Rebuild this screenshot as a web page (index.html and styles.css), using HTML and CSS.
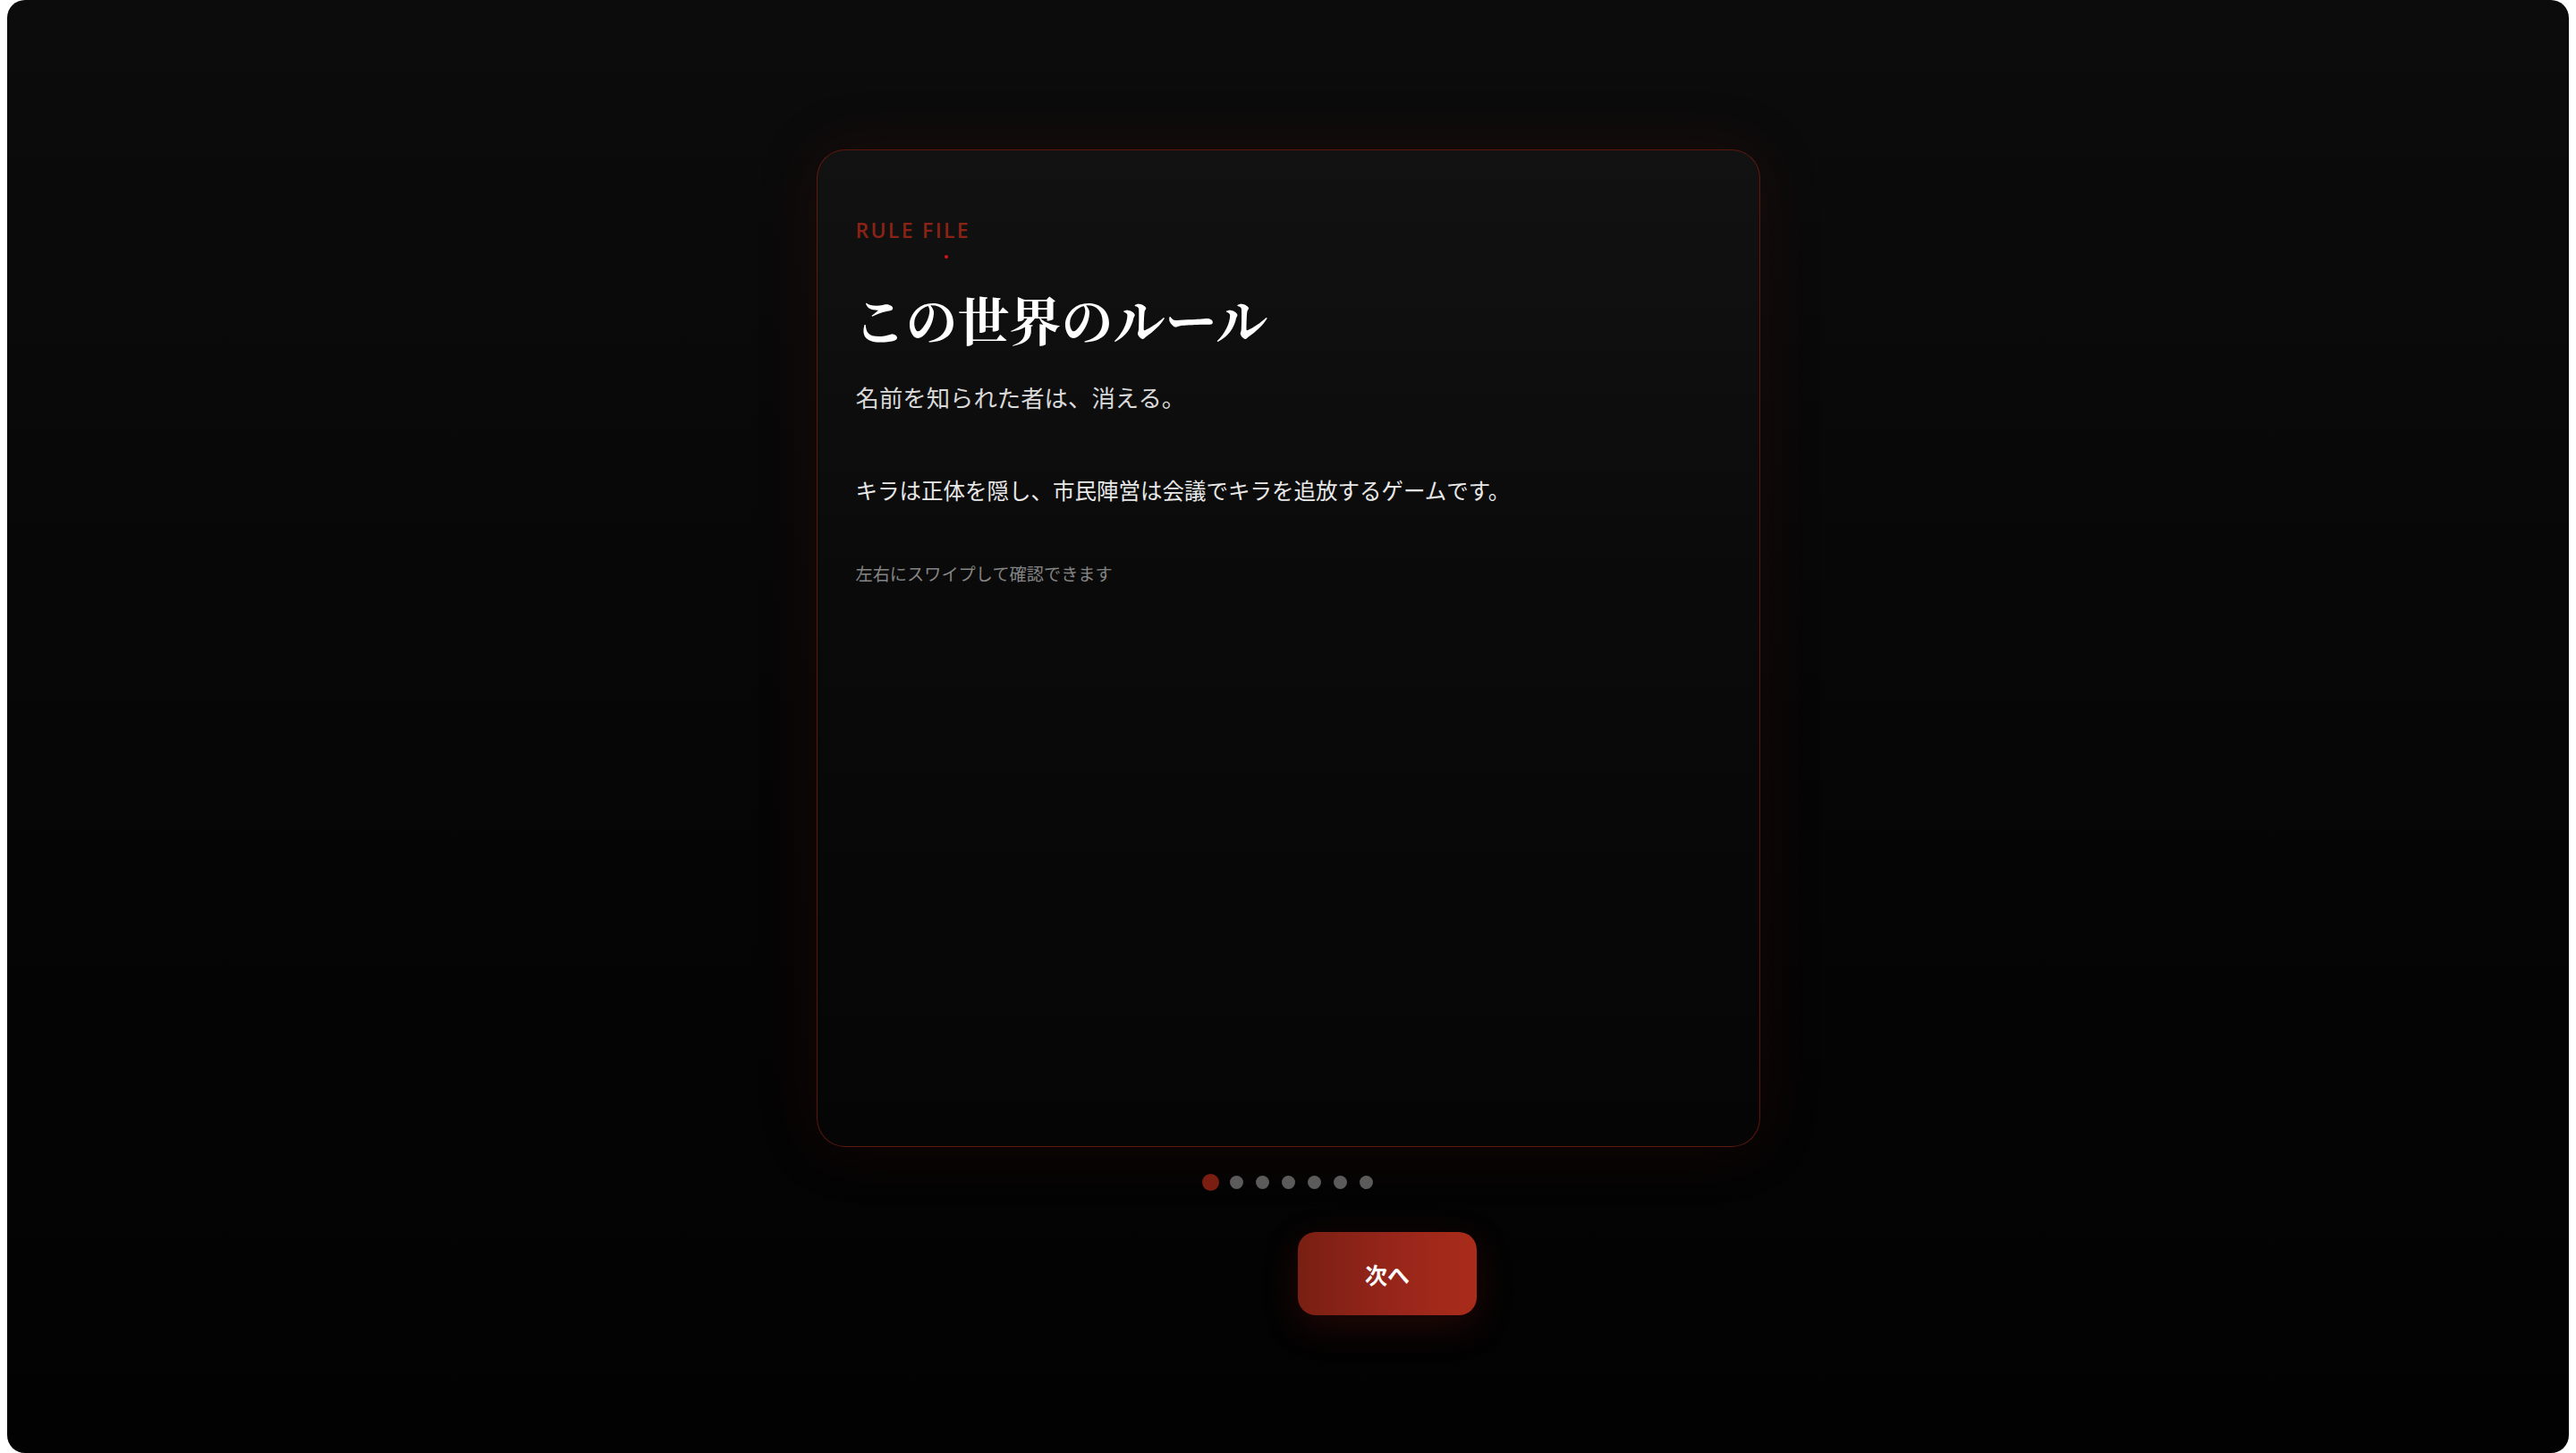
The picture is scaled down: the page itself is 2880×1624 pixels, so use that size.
FILE: index.html
```html
<!DOCTYPE html>
<html lang="ja">
<head>
<meta charset="utf-8">
<title>この世界のルール</title>
<link rel="stylesheet" href="styles.css">
</head>
<body>
<div class="frame">
  <main class="stage">
    <section class="card">
      <div class="label">RULE FILE</div>
      <span class="label-dot"></span>
      <h1 class="title">この世界のルール</h1>
      <p class="lead">名前を知られた者は、消える。</p>
      <p class="body">キラは正体を隠し、市民陣営は会議でキラを追放するゲームです。</p>
      <p class="hint">左右にスワイプして確認できます</p>
    </section>
    <div class="dots">
      <span class="dot active"></span>
      <span class="dot"></span>
      <span class="dot"></span>
      <span class="dot"></span>
      <span class="dot"></span>
      <span class="dot"></span>
      <span class="dot"></span>
    </div>
    <div class="nav">
      <button class="btn btn-back" type="button">戻る</button>
      <button class="btn btn-next" type="button">次へ</button>
    </div>
  </main>
</div>
</body>
</html>
```

FILE: styles.css
```css
html, body {
  margin: 0;
  padding: 0;
  overflow: hidden;
}
body {
  background: #ffffff;
  padding: 0 8px;
  font-family: "Noto Sans CJK JP", "Noto Sans", sans-serif;
}
.frame {
  height: 1624px;
  border-radius: 20px;
  background: linear-gradient(180deg, #0c0c0c 0%, #060606 50%, #020202 100%);
  overflow: hidden;
}
.stage {
  display: flex;
  flex-direction: column;
  align-items: center;
  padding-top: 167px;
}
.card {
  box-sizing: border-box;
  width: 1055px;
  height: 1115px;
  border: 1px solid rgba(120, 30, 18, 0.75);
  border-radius: 32px;
  background: linear-gradient(180deg, #121212 0%, #0a0a0a 45%, #050505 100%);
  box-shadow: 0 0 70px rgba(110, 22, 12, 0.16);
  padding: 74px 43px 0 43px;
  display: flex;
  flex-direction: column;
  align-items: flex-start;
}
.label {
  font-family: "Open Sans", "Noto Sans", sans-serif;
  font-size: 23px;
  line-height: 30px;
  letter-spacing: 0.1em;
  color: #8a2316;
  font-weight: 600;
}
.label-dot {
  width: 4px;
  height: 4px;
  border-radius: 50%;
  background: #d4141a;
  margin: 13px 0 0 99px;
}
.title {
  margin: 31px 0 0 -2px;
  font-family: "Noto Serif CJK JP", "Noto Serif JP", "IPAMincho", serif;
  font-weight: 700;
  font-size: 58px;
  line-height: 72px;
  color: #ffffff;
}
.lead {
  margin: 32px 0 0 0;
  font-size: 26.4px;
  line-height: 40px;
  color: #d9d9d9;
}
.body {
  margin: 66px 0 0 0;
  font-size: 24.5px;
  line-height: 36px;
  color: #e8e8e8;
}
.hint {
  margin: 61px 0 0 0;
  font-size: 19.2px;
  line-height: 28px;
  color: #858585;
}
.dots {
  display: flex;
  align-items: center;
  gap: 14px;
  margin-top: 30px;
  height: 19px;
}
.dot {
  width: 15px;
  height: 15px;
  border-radius: 50%;
  background: #5b5b5b;
}
.dot.active {
  width: 19px;
  height: 19px;
  background: #7b1e12;
  margin-right: -2px;
  margin-left: -2px;
}
.nav {
  display: flex;
  gap: 22px;
  margin-top: 46px;
}
.btn {
  width: 200px;
  height: 93px;
  border: none;
  border-radius: 20px;
  font-family: "Noto Sans CJK JP", sans-serif;
  font-size: 25px;
  font-weight: 700;
  color: #ffffff;
}
.btn-back {
  visibility: hidden;
}
.btn-next {
  background: linear-gradient(90deg, #7a1f13 0%, #95251a 50%, #aa2c1a 100%);
  box-shadow: 0 12px 40px rgba(150, 30, 18, 0.22);
}
```
